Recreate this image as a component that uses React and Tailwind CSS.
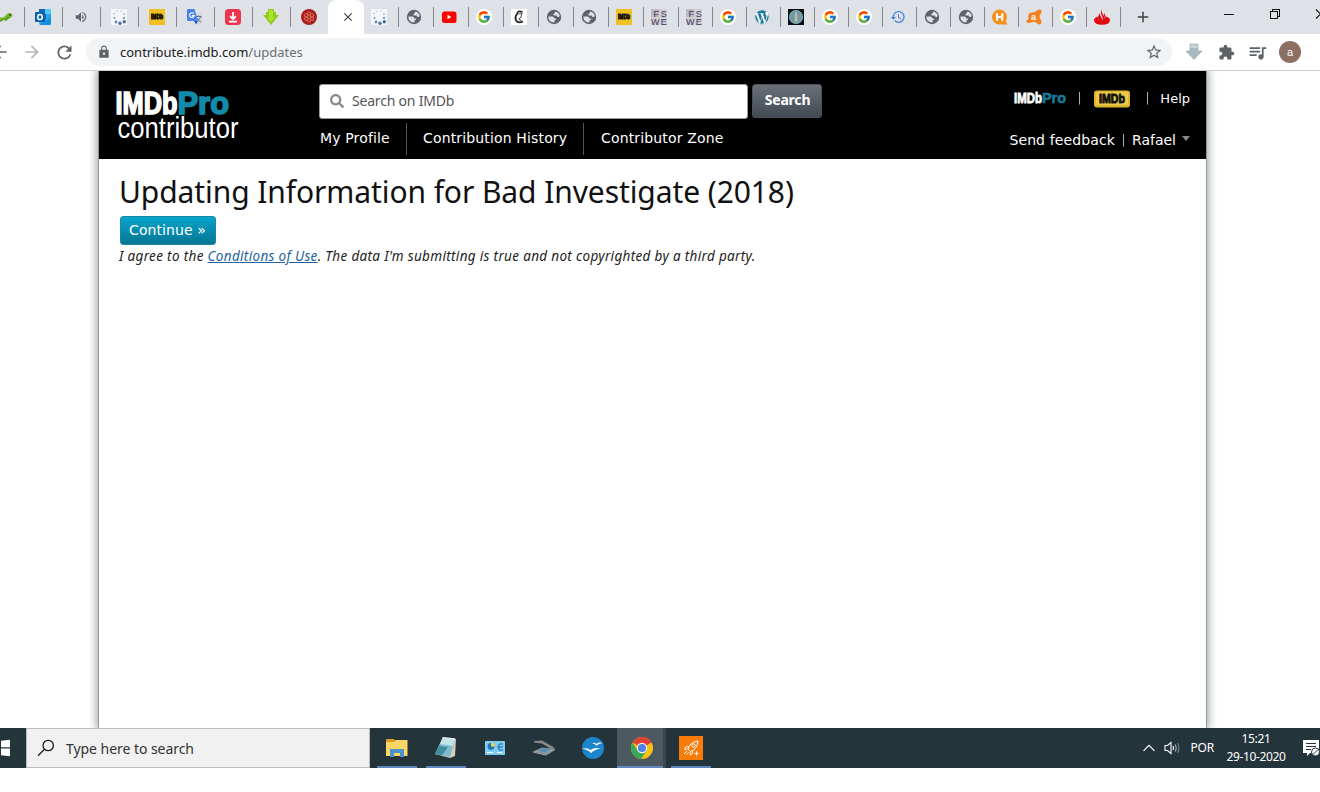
import React from 'react';
import clsx from 'clsx';
import { FcGoogle } from 'react-icons/fc';
import { FaWordpress, FaSearch } from 'react-icons/fa';
import {
    MdArrowBack, MdArrowForward, MdRefresh, MdLock, MdStarBorder, MdExtension,
    MdQueueMusic, MdHistory, MdVolumeUp, MdClose, MdAdd,
} from 'react-icons/md';

/* ---------- favicons (16x16) ---------- */

const Fav = ({ children }) => (
    <svg width="16" height="16" viewBox="0 0 16 16" className="block shrink-0 overflow-visible">{children}</svg>
);

const Lizard = () => (
    <Fav>
        <path d="M0 13 L4 8 L6 9 L10 5 Q13 3 15 5 Q16 8 13 9 L9 12 L6 11 L4 13Z" fill="#76b82a" />
        <circle cx="13" cy="6" r="1" fill="#234d12" />
        <path d="M4 12 L7 9 M8 11 L12 8" stroke="#3f7d17" strokeWidth="1" />
    </Fav>
);

const Outlook = () => (
    <Fav>
        <rect x="4" y="0" width="12" height="15" rx="1" fill="#28a8ea" />
        <rect x="4" y="0" width="6" height="5" fill="#0b68b8" />
        <rect x="10" y="0" width="6" height="5" fill="#50c9f5" />
        <rect x="5" y="5" width="6" height="5" fill="#0f6cbd" />
        <path d="M4 16 L16 8 V15 Q16 16 15 16Z" fill="#1490df" />
        <rect x="0" y="3" width="10" height="10" rx="1" fill="#0f5fae" />
        <ellipse cx="5" cy="8" rx="2.3" ry="2.6" fill="none" stroke="#fff" strokeWidth="1.5" />
    </Fav>
);

const Dots = () => (
    <Fav>
        <rect width="16" height="16" fill="#f3f6fa" />
        <circle cx="6" cy="2" r=".6" fill="#8ba0b8" />
        <circle cx="10" cy="2" r=".6" fill="#8ba0b8" />
        <circle cx="3" cy="4.5" r=".7" fill="#8ba0b8" />
        <circle cx="13" cy="5" r=".8" fill="#7893b3" />
        <circle cx="3.5" cy="9" r="1" fill="#7893b3" />
        <circle cx="13" cy="9" r="1.1" fill="#6785ab" />
        <circle cx="5" cy="13" r="1.4" fill="#6785ab" />
        <circle cx="9" cy="14.3" r="1.7" fill="#5273a1" />
        <circle cx="13.3" cy="12.7" r="1.7" fill="#4a6c9d" />
    </Fav>
);

const ImdbSquare = () => (
    <Fav>
        <rect width="16" height="16" fill="#efbf24" />
        <text x="2" y="10.3" fontSize="6.4" fontWeight="bold" fontFamily="Liberation Sans, sans-serif" textLength="12" lengthAdjust="spacingAndGlyphs" stroke="#1b1608" strokeWidth=".9" fill="#1b1608">IMDb</text>
    </Fav>
);

const Translate = () => (
    <Fav>
        <path d="M5 4 H14.5 Q15.5 4 15.5 5 V14 L13 15.5 H9Z" fill="#d4d8de" />
        <path d="M8.5 7.5 H14.5 M11.5 6.5 V7.5 M9.5 13 Q13 11 13.5 7.8 M10 9 Q11 12 14 13" stroke="#5f7695" strokeWidth="1" fill="none" />
        <path d="M1 0 H7.5 L11 12 H1 Q0 12 0 11 V1 Q0 0 1 0Z" fill="#4a83ea" />
        <path d="M7 12 H11 L9 15.5Z" fill="#2a56c6" />
        <path d="M6.8 4.7 A2.3 2.3 0 1 0 7.2 6.6 H5" stroke="#fff" strokeWidth="1.1" fill="none" />
    </Fav>
);

const RedDownload = () => (
    <Fav>
        <rect width="16" height="16" rx="3.5" fill="#ee3550" />
        <path d="M8 3 V9.5 M5 7.2 L8 10.2 L11 7.2 M4 12.7 H12" stroke="#fff" strokeWidth="1.7" fill="none" />
    </Fav>
);

const GreenDown = () => (
    <Fav>
        <path d="M5 0 H11 V3 H13 V6 H16 L8 16 L0 6 H3 V3 H5Z" fill="#8fcb1c" />
        <path d="M6 1 H10 V8 H12 L8 13 L4 8 H6Z" fill="#aae22d" />
    </Fav>
);

const RedMandala = () => (
    <Fav>
        <circle cx="8" cy="8" r="8" fill="#a81f1d" />
        {[0, 60, 120, 180, 240, 300].map((a) => (
            <circle key={a} cx="8" cy="4.8" r="1.7" transform={`rotate(${a} 8 8)`} fill="none" stroke="#e2705c" strokeWidth=".9" />
        ))}
        <circle cx="8" cy="8" r="1.3" fill="#7d1212" stroke="#e2705c" strokeWidth=".6" />
    </Fav>
);

const Youtube = () => (
    <Fav>
        <rect x="1" y="2.5" width="14.5" height="11.5" rx="2.5" fill="#f00" />
        <path d="M6.5 5.7 L10.3 8 L6.5 10.3Z" fill="#fff" />
    </Fav>
);

const Google = () => (
    <span className="flex size-4 items-center justify-center rounded-full bg-white">
        <FcGoogle size={14} />
    </span>
);

const Sketch = () => (
    <Fav>
        <rect width="16" height="16" fill="#fff" />
        <path d="M11.5 3 Q6.5 1 6 5 Q3.5 8 5 11.5 Q7 14.5 12 12.5" stroke="#222" strokeWidth="1.7" fill="none" />
        <path d="M7 5 L11 4.5 L10 8 L8 10 L10 12" stroke="#666" strokeWidth="1.2" fill="none" />
    </Fav>
);

const World = () => (
    <Fav>
        <circle cx="8" cy="8" r="7.2" fill="#5f6368" />
        <path d="M2.4 7.5 H6.5 Q8.3 7.8 8.3 9.5 H10.3 Q10.5 11.2 8.6 11.3 V13.3 Q5.3 13.9 3.3 11.3 Q2.2 9.5 2.4 7.5Z" fill="#dee1e6" />
        <path d="M9.3 2.5 Q12.8 3.2 13.7 6.7 Q13.5 8 12.3 8 Q10.7 8 10.8 6.4 H7.6 V4.8 Q9.3 4.6 9.3 2.5Z" fill="#dee1e6" />
    </Fav>
);

const Fswe = () => (
    <Fav>
        <rect width="16" height="16" fill="#cfced3" />
        <rect width="8" height="8" fill="#bbbabf" />
        <g fontFamily="Liberation Sans, sans-serif" fontSize="9" fill="#3c3462">
            <text x="2.5" y="7.5">F</text>
            <text x="9.8" y="7.5">S</text>
            <text x="0" y="15.6">W</text>
            <text x="9.8" y="15.6">E</text>
        </g>
    </Fav>
);

const Wordpress = () => <FaWordpress size={16} className="rounded-full bg-white text-[#21759b]" />;

const Statue = () => (
    <Fav>
        <rect width="16" height="16" fill="#0c0f12" />
        <circle cx="8" cy="8" r="7" fill="#6d9aab" />
        <circle cx="8" cy="8" r="6.4" fill="none" stroke="#a7c9d2" strokeWidth=".7" strokeDasharray="1.2 .8" />
        <path d="M7.3 3 H9 L9.6 12.5 H6.5Z" fill="#c7b98e" />
    </Fav>
);

const HistoryFav = () => <MdHistory size={16} className="text-[#3f7fe0]" />;

const OrangeH = () => (
    <Fav>
        <circle cx="7.5" cy="8" r="7.5" fill="#f5901e" />
        <path d="M9 15.5 H15.5 L13 11Z" fill="#f5901e" />
        <path d="M5 4.2 V11.8 M10.2 4.2 V11.8 M5 8 H10.2" stroke="#fff" strokeWidth="2.1" />
    </Fav>
);

const Avast = () => (
    <Fav>
        <path d="M3.5 4 Q8 4 11.5 1.2 Q14.5 -.5 15.7 2 Q15.5 4 13.8 6.5 Q13 8.5 15 11 Q16.5 14 14 15.5 Q12 16 10 13.5 Q8.5 12 6 13.3 Q1.5 15 .3 12.7 Q.3 11.3 2.5 10 Q1.8 6 3.5 4Z" fill="#f58220" />
        <text x="5" y="10.8" fontSize="9" fontWeight="bold" fontFamily="Liberation Sans, sans-serif" fill="#fff">a</text>
    </Fav>
);

const Santander = () => (
    <Fav>
        <path d="M4.2 7.5 Q0 8.7 0 11.2 Q.5 15.7 8 15.8 Q15.5 15.7 16 11.2 Q16 8.7 12 7.5 L11 12 H5Z" fill="#e4070f" />
        <path d="M8.3 0 Q6.7 2.5 9 5.5 Q11.5 9 9.8 12.5 H6.5 Q2.8 9 5 5.5 Q5.5 4.8 5.7 4.3 Q5.7 6 7 8 Q8.5 10.3 8.3 12 Q9.6 9 7.7 6.3 Q5.6 3.2 8.3 0Z" fill="#e4070f" />
        <path d="M10.3 3.5 Q10.3 5 11.5 7 Q13 10 11 12.8 H5 L4.5 10 Q6 12.3 8.3 13 Q11.5 10 10 6.5 Q9.5 5 10.3 3.5Z" fill="#e4070f" />
    </Fav>
);

const wideTabs = [
    Outlook,
    () => <MdVolumeUp size={14} className="text-[#5f6368]" />,
    Dots, ImdbSquare, Translate, RedDownload, GreenDown, RedMandala,
];
const midTabs = [Dots, World, Youtube, Google, Sketch, World, World, ImdbSquare, Fswe];
const narrowTabs = [Fswe, Google, Wordpress, Statue, Google, Google, HistoryFav, World, World, OrangeH, Avast, Google, Santander];

const Tab = ({ icon: Icon, className, last }) => (
    <div className={clsx('flex h-5 shrink-0 items-center border-r', last ? 'border-transparent' : 'border-[#868a90]', className)}>
        <span className="flex size-4 items-center justify-center"><Icon /></span>
    </div>
);

function TabStrip() {
    return (
        <div className="flex h-[34px] bg-[#dee1e6]">
            <div className="flex h-[34px] items-center">
                <div className="flex h-5 w-[25px] items-center border-r border-[#868a90]">
                    <span className="-ml-[3px]"><Lizard /></span>
                </div>
                {wideTabs.map((icon, i) => (
                    <Tab key={i} icon={icon} last={i === 7} className="w-[38px] pl-[10px]" />
                ))}
            </div>
            <div className="-ml-px flex w-9 items-center justify-center rounded-t-lg bg-white pl-1">
                <MdClose size={14} className="text-[#3c4043]" />
            </div>
            <div className="flex h-[34px] items-center">
                {midTabs.map((icon, i) => (
                    <Tab key={i} icon={icon} className="w-[35px] pl-[7px]" />
                ))}
                {narrowTabs.map((icon, i) => (
                    <Tab key={i} icon={icon} className="w-[34px] pl-[7px]" />
                ))}
            </div>
            <div className="flex items-center pl-[13px]">
                <MdAdd size={18} className="text-[#3c4043]" />
            </div>
            <svg width="100" height="24" viewBox="0 0 100 24" className="ml-auto shrink-0" fill="none" stroke="#111" shapeRendering="crispEdges">
                <path d="M4 14.5 H14" />
                <path d="M50.5 11.5 H57.5 V18.5 H50.5Z M52.5 11 V9.5 H59.5 V16.5 H58" />
                <path d="M96 9.5 L105 18.5 M96 18.5 L105 9.5" shapeRendering="auto" strokeWidth="1.1" />
            </svg>
        </div>
    );
}

function Toolbar() {
    return (
        <div className="flex h-[37px] items-center border-b border-[#cfd0d2] bg-white text-[#5f6368]">
            <MdArrowBack size={20} className="-ml-[10px] shrink-0" />
            <MdArrowForward size={20} className="ml-3 shrink-0 text-[#b4b6b9]" />
            <MdRefresh size={21} className="ml-3 shrink-0" />
            <div className="ml-[11px] flex h-7 w-[1086px] shrink-0 items-center rounded-full bg-[#f1f3f4] pl-[11px] pr-[9px]">
                <MdLock size={14} />
                <span className="ml-[9px] pt-px font-['Noto_Sans',sans-serif] text-[13px] text-[#202124]">
                    contribute.imdb.com<span className="text-[#6b6f73]">/updates</span>
                </span>
                <MdStarBorder size={18} className="ml-auto" />
            </div>
            <svg width="18" height="18" viewBox="0 0 18 18" className="ml-[13px] shrink-0">
                <path d="M5 1 H13 V8 H17 L9 16.5 L1 8 H5Z" fill="#a8b9c0" stroke="#93a3aa" strokeWidth=".6" />
                <path d="M5.5 1.5 H12.5 V5 H5.5Z" fill="#c8d3d8" />
            </svg>
            <MdExtension size={17} className="ml-[15px] shrink-0" />
            <MdQueueMusic size={21} className="ml-3 shrink-0" />
            <span className="ml-[11px] flex size-[22px] shrink-0 items-center justify-center rounded-full bg-[#8d6e63] font-['Liberation_Sans',sans-serif] text-[11px] text-white">a</span>
        </div>
    );
}

/* ---------- site header ---------- */

const logoText = { fontFamily: '"Liberation Sans", sans-serif' };

const ContributorLogo = () => (
    <svg width="130" height="60" viewBox="0 0 130 60" className="block overflow-visible" style={logoText}>
        <text x="0.5" y="26.8" fontWeight="bold" fontSize="30.5" strokeWidth="1.6">
            <tspan textLength="62" lengthAdjust="spacingAndGlyphs" fill="#fff" stroke="#fff">IMDb</tspan>
            <tspan textLength="51.5" lengthAdjust="spacingAndGlyphs" fill="#128bab" stroke="#128bab">Pro</tspan>
        </text>
        <text x="2.5" y="50.5" fontSize="29" textLength="121" lengthAdjust="spacingAndGlyphs" fill="#fff">contributor</text>
    </svg>
);

const ProLogo = () => (
    <svg width="54" height="18" viewBox="0 0 54 18" className="block overflow-visible" style={logoText}>
        <text x="1" y="13.8" fontWeight="bold" fontSize="14" strokeWidth=".8">
            <tspan textLength="28" lengthAdjust="spacingAndGlyphs" fill="#fff" stroke="#fff">IMDb</tspan>
            <tspan textLength="24" lengthAdjust="spacingAndGlyphs" fill="#127d98" stroke="#127d98" strokeWidth=".6">Pro</tspan>
        </text>
    </svg>
);

const ImdbBadge = () => (
    <svg width="36" height="18" viewBox="0 0 36 18" className="mt-px block" style={logoText}>
        <rect y=".5" width="36" height="17" rx="3" fill="#dfb52c" />
        <rect x="2" y="2" width="32" height="13" rx="2" fill="#eccb4c" />
        <text x="5" y="13.3" fontSize="13" fontWeight="bold" textLength="26" lengthAdjust="spacingAndGlyphs" fill="#15120a" stroke="#15120a" strokeWidth="1">IMDb</text>
    </svg>
);

const Pipe = ({ className }) => (
    <span className={clsx('w-[5px] text-center text-xs text-white opacity-70 will-change-transform', className)}>|</span>
);

function SiteHeader() {
    return (
        <header className="flex h-[88px] bg-black font-['DejaVu_Sans',sans-serif] text-sm text-white">
            <div className="w-[220px] pt-4 pl-4"><ContributorLogo /></div>
            <div className="pt-[13px]">
                <div className="flex gap-1">
                    <div className="flex h-[35px] w-[429px] items-center rounded-[3px] border border-[#9a9a9a] bg-white pl-[10px]">
                        <FaSearch size={14} className="-mt-px text-[#8a8a8a]" />
                        <span className="-mt-px ml-2 font-['Noto_Sans',sans-serif] text-sm tracking-[-0.2px] text-[#555]">Search on IMDb</span>
                    </div>
                    <button className="h-[34px] w-[70px] rounded-[3px] border border-[#4c5259] bg-linear-to-b from-[#6b717b] to-[#434a53] pb-[2px] pl-px font-['Noto_Sans',sans-serif] text-sm font-bold tracking-[-0.2px]">
                        Search
                    </button>
                </div>
                <nav className="mt-1 flex h-8 whitespace-nowrap leading-[30px] tracking-[0.15px]">
                    <a className="w-[88px] border-r border-[#555] pl-px">My Profile</a>
                    <a className="w-[177px] border-r border-[#555] pl-4">Contribution History</a>
                    <a className="pl-[17px]">Contributor Zone</a>
                </nav>
            </div>
            <div className="ml-auto flex flex-col items-end pr-4">
                <div className="mt-[18px] flex h-[18px] items-center text-[13px]">
                    <ProLogo />
                    <Pipe className="ml-[10px]" />
                    <span className="ml-3"><ImdbBadge /></span>
                    <Pipe className="ml-[15px]" />
                    <a className="ml-[10px] pt-[2px]">Help</a>
                </div>
                <div className="mt-[23px] flex h-5 items-center whitespace-nowrap">
                    <a className="tracking-[0.12px]">Send feedback</a>
                    <Pipe className="mx-[6px]" />
                    <a>Rafael</a>
                    <svg width="8" height="6" className="mb-[2px] ml-[6px]"><path d="M0 0 H8 L4 5Z" fill="#8a8a8a" /></svg>
                </div>
            </div>
        </header>
    );
}

function UpdatePage() {
    return (
        <div className="flex h-[657px] justify-start overflow-hidden bg-white pl-[98px]">
            <div className="w-[1109px] border-x border-[#8f979b] bg-white shadow-[0_0_8px_2px_#a3adb2]">
                <SiteHeader />
                <main className="flex flex-col items-start pl-5 font-['Noto_Sans',sans-serif] text-[#111]">
                    <h1 className="mt-3 h-[45px] whitespace-nowrap text-[30px] leading-[41px] tracking-[-0.09px]">
                        Updating Information for Bad Investigate (2018)
                    </h1>
                    <button className="ml-px h-[29px] w-24 whitespace-nowrap rounded-[3px] border border-[#1b87a3] bg-linear-to-b from-[#07a5cb] to-[#067695] pr-px pb-[2px] font-['DejaVu_Sans',sans-serif] text-sm tracking-[0.1px] text-white">
                        Continue »
                    </button>
                    <p className="whitespace-nowrap text-[13.5px] italic leading-[22px] tracking-[0.33px] text-[#222]">
                        I agree to the <a className="text-[#2362a0] underline">Conditions of Use</a>. The data I'm submitting is true and not copyrighted by a third party.
                    </p>
                </main>
            </div>
        </div>
    );
}

/* ---------- windows taskbar ---------- */

const Explorer = () => (
    <svg width="24" height="24" viewBox="0 0 24 24">
        <path d="M1 3 H9 L11 5 H22 V8 H1Z" fill="#dc9c1c" />
        <path d="M1 6 H9 L11 4 H22.5 V20 H1Z" fill="#fbd667" />
        <path d="M5 21 V13 H19 V21 H15 V17 H9 V21Z" fill="#4a93ce" />
    </svg>
);

const Notepad = () => (
    <svg width="24" height="24" viewBox="0 0 24 24">
        <path d="M9 2 L22 3 L21 20 L16 22 L1 18Z" fill="#d7cdb8" />
        <path d="M8.5 2 L21 3.5 L16 21 L1 18Z" fill="#7dbccb" />
        <path d="M8.5 2 L21 3.5 L19 10 L6 8Z" fill="#c3e2e8" />
        <path d="M5 10 L14 11 L8 19.3 L1 18Z" fill="#418d9f" />
        <path d="M8.5 1.6 L21 3" stroke="#eef5f6" strokeWidth="1.4" />
    </svg>
);

const ControlPanel = () => (
    <svg width="24" height="24" viewBox="0 0 24 24">
        <rect x="2" y="5" width="20" height="14" rx=".8" fill="#7fcdf4" />
        <circle cx="8" cy="10.5" r="3.4" fill="#2275b8" />
        <path d="M8 10.5 V6.5 A4 4 0 0 1 12 10.5Z" fill="#f1cf52" />
        <path d="M16 8 H20 M14 11 H20 M16 14 H20 M16 8 V14" stroke="#1e70ae" strokeWidth="1.1" fill="none" />
        <path d="M4 16.5 H10 M14 16.5 H19" stroke="#fff" strokeWidth="1.2" />
    </svg>
);

const Scanner = () => (
    <svg width="24" height="24" viewBox="0 0 24 24">
        <path d="M1 15.5 L10 11.5 L23 13 L14 18.5Z" fill="#8f979b" />
        <path d="M6 14.7 L11 12.3 L18 13.2 L13 16.3Z" fill="#4f8ebd" />
        <path d="M2 5 L10 4.5 L23 12 L20 13.5 L10 7.5 L2 6.5Z" fill="#8b8a89" />
        <path d="M1 16 L14 19 L23 13.5" stroke="#a9b0b3" strokeWidth="1" fill="none" />
    </svg>
);

const OpenOffice = () => (
    <svg width="24" height="24" viewBox="0 0 24 24">
        <circle cx="12" cy="12" r="11" fill="#1b86cb" />
        <path d="M11 7 Q14 6 15.5 8 Q17.5 5.8 22 7 Q18 7.2 15.5 9.7 Q14 7.5 11 7Z" fill="#fff" />
        <path d="M1 12.5 Q7 11.5 9.5 14 Q13 11 20 12.5 Q14 13 10 17 Q7 13.5 1 12.5Z" fill="#fff" />
    </svg>
);

const Chrome = () => (
    <svg width="24" height="24" viewBox="0 0 24 24">
        <circle cx="12" cy="12" r="11" fill="#fbc116" />
        <path d="M12 12 L2.47 6.5 A11 11 0 0 1 21.53 6.5Z" fill="#df4334" />
        <path d="M12 6.8 H21.7 L21.53 6.5 A11 11 0 0 0 12 1Z" fill="#df4334" />
        <path d="M2.47 6.5 A11 11 0 0 0 11.2 22.97 L16.5 14.6 L12 12 L7.5 14.6Z" fill="#3aa757" />
        <circle cx="12" cy="12" r="5.2" fill="#f5f5f5" />
        <circle cx="12" cy="12" r="4.1" fill="#4c82e8" />
    </svg>
);

const RocketTile = () => (
    <svg width="24" height="24" viewBox="0 0 24 24" fill="none" stroke="#fff" strokeWidth="1">
        <rect width="24" height="24" fill="#f97b0a" stroke="none" />
        <path d="M9 13 Q11 6 19 5 Q18.5 13 11.5 15.5Z" />
        <circle cx="14.5" cy="9.5" r="1.7" />
        <path d="M9.5 10.5 L6.5 11 L5.5 13.5 L8.5 13 M13.5 15 L13.5 17.5 L11.5 19 L11 16 M8 15 L5 18 M9.5 16.5 L7.5 18.5" />
        <path d="M17.5 15.5 V19.5 M15.5 17.5 H19.5" />
    </svg>
);

const apps = [
    { Icon: Explorer, open: true },
    { Icon: Notepad, open: true },
    { Icon: ControlPanel },
    { Icon: Scanner },
    { Icon: OpenOffice },
    { Icon: Chrome, open: true, active: true },
    { Icon: RocketTile, open: true },
];

function Taskbar() {
    return (
        <div className="flex h-10 bg-[#24343b] font-['Noto_Sans',sans-serif] text-white">
            <svg width="26" height="40" viewBox="0 0 26 40" className="shrink-0" fill="#fff">
                <path d="M1 12.8 L10 11.7 V19.3 H1Z M1 20.6 H10 V28.3 L1 27.2Z" />
            </svg>
            <div className="flex w-[344px] shrink-0 items-center border border-[#b9bcbd] bg-[#f1f1f1] pl-[10px] text-[#333]">
                <svg width="18" height="18" viewBox="0 0 18 18" fill="none" stroke="#1a1a1a" strokeWidth="1.3">
                    <circle cx="11.2" cy="6.5" r="5.2" />
                    <path d="M7.5 10.3 L1 16.8" />
                </svg>
                <span className="ml-[11px] whitespace-nowrap pt-px text-sm tracking-[-0.05px]">Type here to search</span>
            </div>
            <div className="flex pl-[2px]">
                {apps.map(({ Icon, open, active }, i) => (
                    <div key={i} className={clsx('flex h-10 w-[49px] flex-col items-center', active && 'border-r-[3px] border-[#39474e] bg-[#4c5960]')}>
                        <span className={clsx('mt-2 h-[30px]', active && 'pl-1')}><Icon /></span>
                        {open && <span className={clsx('h-[2px] bg-[#5f87bb]', active ? 'w-full' : 'w-10')} />}
                    </div>
                ))}
            </div>
            <div className="ml-auto flex items-center text-xs">
                <svg width="12" height="8" viewBox="0 0 12 8" fill="none" stroke="#fff" strokeWidth="1.2"><path d="M.5 6.8 L6 1.3 L11.5 6.8" /></svg>
                <svg width="18" height="16" viewBox="0 0 18 16" className="ml-[9px]" fill="none" stroke="#fff" strokeWidth="1.1">
                    <path d="M1 5.5 H3.5 L7 2.5 V13.5 L3.5 10.5 H1Z" />
                    <path d="M9 6 Q10 8 9 10" />
                    <path d="M11.2 4.5 Q13.2 8 11.2 11.5" stroke="#a5adb1" />
                    <path d="M13.5 3 Q16.5 8 13.5 13" stroke="#76838a" />
                </svg>
                <span className="ml-[9px] tracking-[-0.2px]">POR</span>
                <div className="ml-3 flex w-[60px] flex-col items-center whitespace-nowrap leading-[18px] tracking-[-0.35px]">
                    <span>15:21</span>
                    <span>29-10-2020</span>
                </div>
                <svg width="17" height="20" viewBox="0 0 17 20" className="ml-[17px]">
                    <path d="M0 2 H16 V15 H7 L4 18 V15 H0Z" fill="#fff" />
                    <path d="M3 5.5 H13 M3 8.5 H13 M3 11.5 H8" stroke="#24343b" strokeWidth="1.2" />
                    <circle cx="12.5" cy="14" r="4" fill="#fff" stroke="#24343b" />
                    <path d="M10 16.5 L15 11.5" stroke="#24343b" />
                </svg>
            </div>
        </div>
    );
}

export default function App() {
    return (
        <div className="h-[792px] w-[1320px] overflow-hidden bg-white">
            <TabStrip />
            <Toolbar />
            <UpdatePage />
            <Taskbar />
        </div>
    );
}
